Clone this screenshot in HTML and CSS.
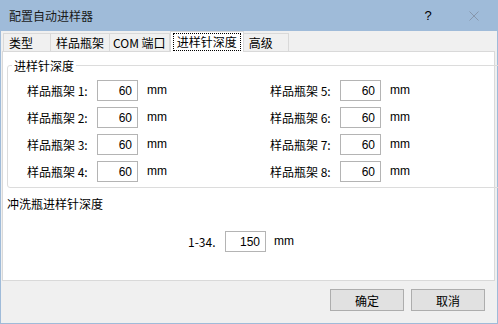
FILE: index.html
```html
<!DOCTYPE html>
<html lang="zh-CN">
<head>
    <meta charset="UTF-8">
    <title>配置自动进样器</title>
    <link rel="stylesheet" href="styles.css">
</head>
<body>
    <div class="window">
        <div class="titlebar">
            <span class="title">配置自动进样器</span>
            <span class="caption-btn help">?</span>
            <span class="caption-btn close">
                <svg width="10" height="10" viewBox="0 0 10 10">
                    <path d="M0.5 0.5 L9.5 9.5 M9.5 0.5 L0.5 9.5" stroke="#8797ad" stroke-width="1" fill="none"/>
                </svg>
            </span>
        </div>

        <div class="dialog-body">
            <div class="tabs">
                <div class="tab">类型</div>
                <div class="tab">样品瓶架</div>
                <div class="tab tab-narrow">COM 端口</div>
                <div class="tab active"><span class="focus">进样针深度</span></div>
                <div class="tab">高级</div>
            </div>

            <div class="panel">
                <fieldset class="group">
                    <legend>进样针深度</legend>
                    <div class="rack-grid">
                        <div class="field"><label>样品瓶架 1:</label><input type="text" value="60"><span class="unit">mm</span></div>
                        <div class="field"><label>样品瓶架 2:</label><input type="text" value="60"><span class="unit">mm</span></div>
                        <div class="field"><label>样品瓶架 3:</label><input type="text" value="60"><span class="unit">mm</span></div>
                        <div class="field"><label>样品瓶架 4:</label><input type="text" value="60"><span class="unit">mm</span></div>
                        <div class="field"><label>样品瓶架 5:</label><input type="text" value="60"><span class="unit">mm</span></div>
                        <div class="field"><label>样品瓶架 6:</label><input type="text" value="60"><span class="unit">mm</span></div>
                        <div class="field"><label>样品瓶架 7:</label><input type="text" value="60"><span class="unit">mm</span></div>
                        <div class="field"><label>样品瓶架 8:</label><input type="text" value="60"><span class="unit">mm</span></div>
                    </div>
                </fieldset>

                <div class="section-label">冲洗瓶进样针深度</div>
                <div class="field wash">
                    <label>1-34.</label><input type="text" value="150"><span class="unit">mm</span>
                </div>
            </div>

            <div class="buttons">
                <button class="btn">确定</button>
                <button class="btn">取消</button>
            </div>
        </div>
    </div>
</body>
</html>
```

FILE: styles.css
```css
* {
    box-sizing: border-box;
}

body {
    margin: 0;
    font-family: "Noto Sans CJK SC", "Liberation Sans", sans-serif;
    font-size: 12px;
    color: #000;
}

.window {
    width: 498px;
    height: 324px;
    background-color: #f0f0f0;
    border: 1px solid #9fbbd9;
    border-top: none;
}

/* title bar */
.titlebar {
    height: 31px;
    display: flex;
    align-items: center;
    background-color: #9fbbd9;
    margin: 0 -1px;
    padding-left: 9px;
}

.title {
    flex: 1;
    line-height: 17px;
    color: #1a1a1a;
}

.caption-btn {
    width: 46px;
    height: 31px;
    display: flex;
    align-items: center;
    justify-content: center;
}

.help {
    font-family: "Liberation Sans", sans-serif;
    font-size: 13px;
}

.close {
    margin-right: 1px;
}

/* tabs */
.dialog-body {
    padding: 0 2px 0 1px;
}

.tabs {
    height: 20px;
    display: flex;
    align-items: flex-end;
    padding-left: 1px;
}

.tab {
    height: 18px;
    padding: 0 5px;
    line-height: 17px;
    border: 1px solid #d9d9d9;
    border-bottom: none;
    margin-right: -1px;
    background-color: #f0f0f0;
    white-space: nowrap;
}

.tab:first-child {
    min-width: 48px;
}

.tab:last-child {
    min-width: 46px;
}

.tab-narrow {
    padding: 0 3px;
}

.tab.active {
    position: relative;
    z-index: 1;
    height: 21px;
    margin: 0 -1px -1px 1px;
    padding: 0 3px;
    background-color: #fff;
    display: flex;
    align-items: center;
}

.focus {
    outline: 1px dotted #000;
    padding: 0 3px;
    line-height: 16px;
}

/* panel */
.panel {
    height: 230px;
    background-color: #fff;
    border: 1px solid #d9d9d9;
    padding: 0 3px 0 4px;
}

.group {
    margin: 5px 0 0 0;
    padding: 0 0 5px 19px;
    border: 1px solid #dcdcdc;
    border-radius: 3px;
}

.group legend {
    margin-left: -15px;
    padding: 0 2px;
    line-height: 17px;
}

.rack-grid {
    margin-top: 6px;
    display: grid;
    grid-template-columns: 243px 243px;
    grid-template-rows: repeat(4, 21px);
    grid-auto-flow: column;
    row-gap: 6px;
}

.field {
    display: flex;
    align-items: center;
}

.field label {
    width: 70px;
    line-height: 17px;
}

.field input {
    width: 41px;
    height: 21px;
    border: 1px solid #b4b4b4;
    padding: 0 5px 0 0;
    text-align: right;
    font-family: "Liberation Sans", sans-serif;
    font-size: 12px;
    color: #000;
    background: #fff;
}

.unit {
    margin-left: 9px;
    font-family: "Liberation Sans", sans-serif;
    line-height: 17px;
}

.section-label {
    margin-top: 7px;
    line-height: 17px;
}

.field.wash {
    margin-top: 19px;
    padding-left: 181px;
}

.field.wash label {
    width: 37px;
}

.field.wash .unit {
    margin-left: 8px;
}

/* footer buttons */
.buttons {
    display: flex;
    justify-content: flex-end;
    gap: 7px;
    margin-top: 8px;
    padding-right: 10px;
}

.btn {
    width: 74px;
    height: 22px;
    border: 1px solid #adadad;
    background-color: #e1e1e1;
    font-family: inherit;
    font-size: 12px;
    color: #000;
    padding: 0;
}
```
